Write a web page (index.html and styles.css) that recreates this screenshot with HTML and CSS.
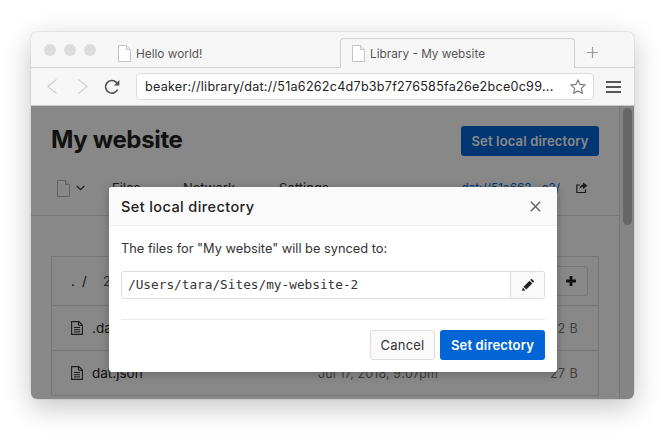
FILE: index.html
```html
<!DOCTYPE html>
<html lang="en">
<head>
<meta charset="utf-8">
<title>Library - My website</title>
<link rel="stylesheet" href="styles.css">
</head>
<body>
<div class="window">
  <div class="tabbar">
    <div class="lights"><i class="light"></i><i class="light"></i><i class="light"></i></div>
    <div class="tab">
      <svg class="fileicon" viewBox="0 0 13 17"><path d="M.5.5h8l4 4v12H.5z" fill="#fff" stroke="#c4c4c4"/><path d="M8.5.5v4h4" fill="#eee" stroke="#c4c4c4"/></svg>
      <span>Hello world!</span>
    </div>
    <div class="tab active">
      <svg class="fileicon" viewBox="0 0 13 17"><path d="M.5.5h8l4 4v12H.5z" fill="#fff" stroke="#c4c4c4"/><path d="M8.5.5v4h4" fill="#eee" stroke="#c4c4c4"/></svg>
      <span>Library - My website</span>
    </div>
    <svg class="plus" viewBox="0 0 11 11"><path d="M5.5 0v11M0 5.5h11" stroke="#999" stroke-width="1.2" fill="none"/></svg>
  </div>
  <div class="toolbar">
    <svg class="nav-ico" viewBox="0 0 10 15"><path d="M9.500.5L1 7.500l8.500 7" fill="none" stroke="#d0d0d0" stroke-width="1.2"/></svg>
    <svg class="nav-ico fwd" viewBox="0 0 10 15"><path d="M.5.5L9 7.500.5 14.500" fill="none" stroke="#d0d0d0" stroke-width="1.2"/></svg>
    <svg class="reload" viewBox="0 0 16 16"><path d="M13.6 10.500A6.300 6.300 0 1 1 12.400 3.400L14 5" fill="none" stroke="#555" stroke-width="1.7"/><path d="M15.400 .9v5.600H9.800z" fill="#555"/></svg>
    <div class="urlbar">
      <span class="url">beaker://library/dat://51a6262c4d7b3b7f276585fa26e2bce0c99...</span>
      <svg class="star" viewBox="0 0 16 15"><path d="M8 .9l2.100 4.500 4.900.6-3.600 3.400.9 4.900L8 11.900l-4.300 2.400.9-4.900L1 6l4.900-.6z" fill="none" stroke="#777" stroke-width="1.1"/></svg>
    </div>
    <div class="burger"><i></i><i></i><i></i></div>
  </div>
  <div class="content">
    <div class="page">
      <div class="scroll-main">
        <div class="head">
          <h1>My website</h1>
          <button class="btn primary" type="button">Set local directory</button>
        </div>
        <div class="subnav">
          <svg class="pagefile" viewBox="0 0 13 17"><path d="M.5.5h8l4 4v12H.5z" fill="#fff" stroke="#bbb"/><path d="M8.5.5v4h4" fill="#eee" stroke="#bbb"/></svg>
          <svg class="chev" viewBox="0 0 9 6"><path d="M.7.8l3.800 3.800L8.300.8" fill="none" stroke="#333" stroke-width="1.2"/></svg>
          <span class="nav-link first">Files</span>
          <span class="nav-link second">Network</span>
          <span class="nav-link third">Settings</span>
          <span class="dat-link">dat://51a662...e2/</span>
          <svg class="share" viewBox="0 0 12 12"><path d="M9.500 7.500v3H.8V3H4" fill="none" stroke="#333" stroke-width="1.2"/><path d="M7 .5l4.500 3.200L7 6.900V5C5 5 4 6 3.500 7.500 3.500 4.500 5 2.500 7 2.400z" fill="#333"/></svg>
        </div>
        <div class="files">
          <div class="files-head">
            <span class="crumb">.&nbsp;&nbsp;/</span>
            <span class="crumb-count">2 files</span>
            <span class="add"><svg class="add-ico" viewBox="0 0 12 12"><path d="M6 1v10M1 6h10" stroke="#222" stroke-width="2.800" fill="none"/></svg></span>
          </div>
          <div class="file-row">
            <svg class="doc" viewBox="0 0 12 14"><path d="M.6.6h7.200l3.600 3.400v9.400H.6z" fill="none" stroke="#333" stroke-width="1.1"/><path d="M3 6.500h6M3 8.700h6M3 10.900h6M7.500.8v3.500h3.800" fill="none" stroke="#333"/></svg>
            <span class="fname">.datignore</span><span class="fdate">Jul 17, 2018, 9:07pm</span><span class="fsize">12 B</span>
          </div>
          <div class="file-row">
            <svg class="doc" viewBox="0 0 12 14"><path d="M.6.6h7.200l3.600 3.400v9.400H.6z" fill="none" stroke="#333" stroke-width="1.1"/><path d="M3 6.500h6M3 8.700h6M3 10.900h6M7.500.8v3.500h3.800" fill="none" stroke="#333"/></svg>
            <span class="fname">dat.json</span><span class="fdate">Jul 17, 2018, 9:07pm</span><span class="fsize">27 B</span>
          </div>
        </div>
      </div>
      <div class="scrollbar"><div class="thumb"></div></div>
    </div>
    <div class="dim"></div>
    <div class="modal">
      <div class="modal-head">
        <span class="modal-title">Set local directory</span>
        <svg class="close" viewBox="0 0 11 11"><path d="M.8.8l9.400 9.400M10.200.8L.8 10.200" stroke="#666" stroke-width="1.5" fill="none"/></svg>
      </div>
      <div class="modal-body">
        <p class="modal-text">The files for "My website" will be synced to:</p>
        <div class="path-field">
          <span class="path">/Users/tara/Sites/my-website-2</span>
          <span class="path-edit"><svg class="pencil" viewBox="0 0 12 12"><path d="M0 12l.8-3.500 2.700 2.700zM1.500 7.700L7.500 1.700l2.800 2.800-6 6zM8.300.9L9 .2c.3-.3.700-.3 1 0l1.800 1.800c.3.300.3.700 0 1l-.7.700z" fill="#222"/></svg></span>
        </div>
        <div class="modal-foot">
          <button class="btn cancel" type="button">Cancel</button>
          <button class="btn confirm" type="button">Set directory</button>
        </div>
      </div>
    </div>
  </div>
</div>
</body>
</html>
```

FILE: styles.css
```css
* { box-sizing: border-box; }
html, body { margin: 0; height: 442px; overflow: hidden; background: #fff; }
body { font-family: Inter, "Liberation Sans", sans-serif; color: #333; padding: 32px 35px 0 31px; }

.window {
  width: 603px; height: 367px;
  border-radius: 6px;
  overflow: hidden;
  display: flex; flex-direction: column;
  box-shadow: 0 0 1px rgba(0,0,0,.5), 0 8px 28px rgba(0,0,0,.24);
  background: #f6f6f6;
}

.tabbar {
  height: 36px; flex: none;
  display: flex; align-items: flex-end;
  background: #f6f6f6;
  border-bottom: 1px solid #d0d0d0;
  padding-left: 13px;
}
.lights { display: flex; gap: 8px; align-self: flex-start; margin-top: 12px; width: 74px; }
.light { width: 12px; height: 12px; border-radius: 50%; background: #dcdcdc; }
.tab {
  width: 222px; height: 30px; margin-bottom: -1px;
  display: flex; align-items: center; gap: 5px;
  font-size: 11.8px; color: #555;
  padding: 1px 0 0 0;
  border-bottom: 0;
}
.tab.active {
  width: 235px;
  background: #f6f6f6; padding-left: 11px;
  border: 1px solid #d0d0d0; border-bottom: 1px solid #f6f6f6;
  border-radius: 4px 4px 0 0;
}
.fileicon { width: 13px; height: 17px; flex: none; }
.plus { width: 11px; height: 11px; margin: 0 0 9px 12px; }

.toolbar {
  height: 38px; flex: none;
  display: flex; align-items: center;
  background: #f6f6f6;
  border-bottom: 1px solid #c9c9c9;
  padding: 0 0 0 16px;
}
.nav-ico { width: 10px; height: 15px; }
.nav-ico.fwd { margin-left: 21px; }
.reload { width: 16px; height: 16px; margin-left: 16px; }
.urlbar {
  width: 458px; height: 27px; margin-left: 16px;
  background: #fff; border: 1px solid #dcdcdc; border-radius: 4px;
  display: flex; align-items: center; justify-content: space-between;
  padding: 0 7px 0 8px;
}
.url { font-size: 12.6px; color: #222; white-space: nowrap; letter-spacing: .24px; }
.star { width: 16px; height: 15px; }
.burger { display: flex; flex-direction: column; gap: 3px; margin-left: 12px; }
.burger i { display: block; width: 15px; height: 2px; background: #555; }

.content { flex: 1; position: relative; overflow: hidden; min-height: 0; }
.page { display: flex; height: 100%; background: #fff; }
.scroll-main { flex: 1; min-width: 0; }
.scrollbar { width: 15px; flex: none; border-left: 1px solid #ddd; background: #fafafa; padding: 2px 2px 0 3px; }
.thumb { height: 117px; border-radius: 5px; background: #c0c0c0; }

.head { display: flex; justify-content: space-between; align-items: flex-start; padding: 20px 20px 0 20px; height: 63px; }
h1 { margin: 0; font-size: 24px; font-weight: 700; line-height: 27px; color: #222; letter-spacing: -.35px; }
.btn { font-family: inherit; border-radius: 3px; cursor: pointer; font-size: 13px; }
.primary { width: 138px; height: 30px; border: 0; background: #0265d6; color: #fff; font-weight: 600; letter-spacing: .15px; }

.subnav { height: 47px; display: flex; align-items: center; padding: 0 31px 8px 26px; border-bottom: 1px solid #ddd; font-size: 13px; }
.pagefile { width: 13px; height: 17px; flex: none; }
.chev { width: 9px; height: 6px; margin: 0 0 0 6px; flex: none; }
.nav-link { color: #333; }
.nav-link.first { margin-left: 27px; width: 71px; }
.nav-link.second { width: 96px; }
.nav-link.third { flex: 1; }
.dat-link { color: #0265d6; margin-right: 16px; font-size: 11.8px; }
.share { width: 12px; height: 12px; flex: none; }

.files { margin: 40px 20px 0 20px; border: 1px solid #ddd; border-bottom: 0; }
.files-head { height: 49px; display: flex; align-items: center; padding: 0 10px 0 19px; border-bottom: 1px solid #ddd; font-size: 13px; }
.crumb { color: #222; width: 32px; }
.crumb-count { flex: 1; color: #555; }
.add { width: 34px; height: 30px; border: 1px solid #ddd; border-radius: 3px; display: flex; align-items: center; justify-content: center; }
.add-ico { width: 12px; height: 12px; }
.file-row { height: 45px; display: flex; align-items: center; padding: 0 20px 0 19px; border-bottom: 1px solid #ddd; font-size: 13.5px; }
.doc { width: 12px; height: 14px; flex: none; }
.fname { margin-left: 9px; width: 226px; color: #222; }
.fdate { flex: 1; color: #777; font-size: 12.5px; letter-spacing: .1px; }
.fsize { color: #777; font-size: 12.5px; letter-spacing: .4px; }

.dim { position: absolute; inset: 0; background: rgba(0,0,0,.465); }
.modal {
  position: absolute; left: 78px; top: 81px;
  width: 448px; height: 185px;
  background: #fff; border-radius: 3px;
  box-shadow: 0 2px 10px rgba(0,0,0,.25);
  display: flex; flex-direction: column;
}
.modal-head {
  height: 39px; flex: none;
  background: #fafafa; border-bottom: 1px solid #ebebeb;
  border-radius: 3px 3px 0 0;
  display: flex; align-items: center; justify-content: space-between;
  padding: 0 16px 0 12px;
}
.modal-title { font-size: 14.5px; font-weight: 500; color: #222; letter-spacing: .4px; }
.close { width: 11px; height: 11px; }
.modal-body { flex: 1; padding: 0 12px; }
.modal-text { margin: 14px 0 0; font-size: 12.8px; line-height: 18px; color: #333; }
.path-field { margin-top: 13px; height: 28px; display: flex; border: 1px solid #ddd; border-radius: 3px; }
.path { flex: 1; font-family: "DejaVu Sans Mono", monospace; font-size: 12.75px; line-height: 26px; padding-left: 6px; color: #333; }
.path-edit { width: 34px; border-left: 1px solid #ddd; background: #fafafa; display: flex; align-items: center; justify-content: center; }
.pencil { width: 12px; height: 12px; }
.modal-foot { margin-top: 20px; border-top: 1px solid #ebebeb; padding-top: 10px; display: flex; justify-content: flex-end; gap: 5px; }
.cancel { width: 65px; height: 30px; border: 1px solid #ddd; background: #fafafa; color: #333; letter-spacing: .2px; }
.confirm { width: 105px; height: 30px; border: 0; background: #0265d6; color: #fff; font-weight: 600; letter-spacing: .15px; }
```
